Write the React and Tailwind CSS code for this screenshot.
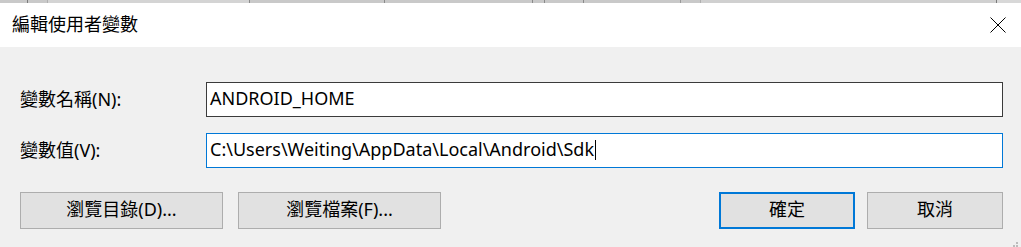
export default function App() {
  const font = { fontFamily: '"Segoe UI", "Noto Sans", "Noto Sans CJK TC", sans-serif' };
  return (
    <div className="w-[1021px] h-[247px] bg-[#f0f0f0] overflow-hidden flex flex-col text-black" style={font}>
      {/* background window strip */}
      <div className="h-[3px] bg-[#c9c9c9] flex shrink-0">
        <div className="w-[27px]" />
        <div className="w-px bg-[#7a7a7a]" />
        <div className="w-[19px]" />
        <div className="w-px bg-[#b0b0b0]" />
        <div className="w-[201px] bg-[#d4d4d4]" />
        <div className="w-px bg-[#8a8a8a]" />
        <div className="w-[134px]" />
        <div className="w-px bg-[#8a8a8a]" />
        <div className="w-[147px]" />
        <div className="w-px bg-[#8a8a8a]" />
        <div className="w-[11px]" />
        <div className="w-px bg-[#8a8a8a]" />
        <div className="w-[38px]" />
        <div className="w-px bg-[#8a8a8a]" />
        <div className="w-[96px]" />
        <div className="w-px bg-[#9a9a9a]" />
        <div className="w-[19px]" />
        <div className="w-px bg-[#b0b0b0]" />
        <div className="w-[295px] bg-[#d0d0d0]" />
        <div className="w-px bg-[#7a7a7a]" />
        <div className="flex-1 bg-[#d8d8d8]" />
      </div>
      {/* title bar */}
      <div className="h-[44px] bg-white flex items-center justify-between pl-[12px] pr-[15px] shrink-0">
        <span className="text-[18px] leading-none pb-[3px]">編輯使用者變數</span>
        <svg width="16" height="16" viewBox="0 0 16 16">
          <path d="M0.5 0.5 L15.5 15.5 M15.5 0.5 L0.5 15.5" stroke="#000" strokeWidth="1" fill="none" />
        </svg>
      </div>
      {/* body */}
      <div className="flex flex-col pl-[20px] pr-[18px] pt-[35px]">
        <div className="flex items-center">
          <div className="w-[186px] text-[18px] leading-none pb-[2px]">變數名稱(N):</div>
          <div className="flex-1 h-[35px] bg-white border border-[#3b3b3b] flex items-center pl-[3px] text-[18px] pb-[2px]">
            ANDROID_HOME
          </div>
        </div>
        <div className="flex items-center mt-[16px]">
          <div className="w-[186px] text-[18px] leading-none pb-[2px]">變數值(V):</div>
          <div className="flex-1 h-[35px] bg-white border border-[#0078d7] flex items-center pl-[3px] text-[18px] pb-[2px]">
            <span>C:\Users\Weiting\AppData\Local\Android\Sdk</span>
            <span className="w-px h-[20px] bg-black ml-[1px]" />
          </div>
        </div>
        <div className="flex mt-[24px]">
          <button className="w-[203px] h-[37px] bg-[#e1e1e1] border border-[#adadad] text-[18px] pb-[2px]">瀏覽目錄(D)...</button>
          <button className="w-[203px] h-[37px] bg-[#e1e1e1] border border-[#adadad] text-[18px] pb-[2px] ml-[15px]">瀏覽檔案(F)...</button>
          <div className="flex-1" />
          <button className="w-[136px] h-[37px] bg-[#e1e1e1] border-2 border-[#0078d7] text-[18px] pb-[2px]">確定</button>
          <button className="w-[136px] h-[37px] bg-[#e1e1e1] border border-[#adadad] text-[18px] pb-[2px] ml-[12px]">取消</button>
        </div>
      </div>
      <div className="relative flex-1">
        <div className="absolute right-[3px] bottom-0 grid grid-cols-3 gap-[1px]">
          <div className="w-[2px] h-[2px]" />
          <div className="w-[2px] h-[2px]" />
          <div className="w-[2px] h-[2px] bg-[#bcbcbc]" />
          <div className="w-[2px] h-[2px]" />
          <div className="w-[2px] h-[2px] bg-[#bcbcbc]" />
          <div className="w-[2px] h-[2px] bg-[#bcbcbc]" />
        </div>
      </div>
    </div>
  );
}
